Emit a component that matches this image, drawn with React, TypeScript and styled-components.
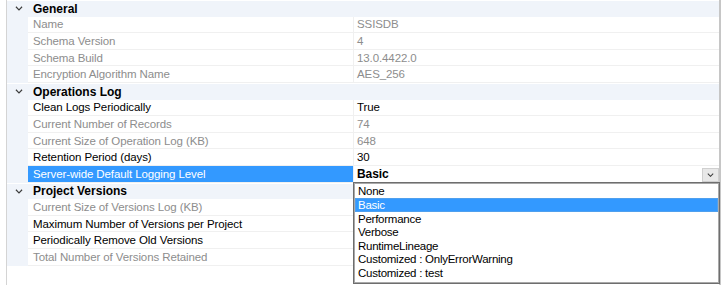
import React, { FC } from "react";
import styled, { createGlobalStyle } from "styled-components";

const GlobalStyle = createGlobalStyle`
  html, body {
    margin: 0;
    padding: 0;
    background: #fff;
  }
  body {
    font-family: "Liberation Sans", Arial, sans-serif;
    font-size: 11.5px;
    letter-spacing: -0.1px;
    color: #000;
  }
`;

const ROW_H = "16.6px";
const MARGIN_BG = "#f0f4fa";

export const StyledPage = styled.div`
  width: 728px;
  height: 290px;
  overflow: hidden;
  display: flex;
`;

export const StyledGrid = styled.div`
  margin-left: 6px;
  width: 712px;
  height: 285px;
  border-left: 1px solid #d4d4d4;
  border-right: 2px solid #c6c6c6;
  display: flex;
  flex-direction: column;
`;

export const StyledCategory = styled.div`
  display: flex;
  align-items: center;
  height: ${ROW_H};
  box-sizing: border-box;
  border-top: 1px solid #fff;
  background: ${MARGIN_BG};
  font-weight: bold;
  font-size: 12px;
  letter-spacing: 0;
`;

export const StyledToggle = styled.div`
  width: 21px;
  display: flex;
  justify-content: center;
  padding-left: 2px;
  box-sizing: border-box;
`;

export const StyledCategoryTitle = styled.span`
  padding-left: 5px;
`;

export const StyledRow = styled.div`
  display: flex;
  height: ${ROW_H};
`;

export const StyledMargin = styled.div`
  width: 21px;
  flex: none;
  background: ${MARGIN_BG};
`;

export const StyledName = styled.div<{ $muted?: boolean; $selected?: boolean }>`
  width: 326px;
  flex: none;
  box-sizing: border-box;
  display: flex;
  align-items: center;
  padding-left: 5px;
  border-right: 1px solid #f0f0f0;
  border-bottom: 1px solid #f0f0f0;
  white-space: nowrap;
  color: ${({ $muted, $selected }) =>
    $selected ? "#fff" : $muted ? "#8d8d8d" : "#000"};
  background: ${({ $selected }) => ($selected ? "#3399ff" : "#fff")};
`;

export const StyledValue = styled.div<{ $muted?: boolean; $bold?: boolean }>`
  flex: 1;
  position: relative;
  box-sizing: border-box;
  display: flex;
  align-items: center;
  padding-left: 3px;
  border-bottom: 1px solid #f0f0f0;
  white-space: nowrap;
  color: ${({ $muted }) => ($muted ? "#8d8d8d" : "#000")};
  font-weight: ${({ $bold }) => ($bold ? "bold" : "normal")};
  font-size: ${({ $bold }) => ($bold ? "12px" : "inherit")};
`;

export const StyledValueText = styled.span`
  flex: 1;
`;

export const StyledDropButton = styled.div`
  width: 17px;
  height: 14px;
  margin-top: 2px;
  box-sizing: border-box;
  border: 1px solid #cfcfcf;
  background: #e8e8e8;
  display: flex;
  align-items: center;
  justify-content: center;
`;

export const StyledList = styled.ul`
  position: absolute;
  top: 100%;
  left: -1px;
  right: -1px;
  height: 102px;
  margin: 0;
  padding: 2px 1px 0;
  list-style: none;
  box-sizing: border-box;
  background: #fff;
  border: 1px solid #6e6e6e;
  box-shadow: inset 0 0 0 1px #a9a9a9;
  font-weight: normal;
  font-size: 11.5px;
  letter-spacing: -0.25px;
  z-index: 2;
`;

export const StyledItem = styled.li<{ $active?: boolean }>`
  height: 13.6px;
  box-sizing: border-box;
  display: flex;
  align-items: center;
  padding-left: 2px;
  color: ${({ $active }) => ($active ? "#fff" : "#000")};
  background: ${({ $active }) => ($active ? "#3399ff" : "transparent")};
  border: 1px solid ${({ $active }) => ($active ? "#4fa0ee" : "transparent")};
`;

export const StyledFiller = styled.div`
  flex: 1;
`;

type Prop = {
  name: string;
  value?: string;
  muted?: boolean;
  selected?: boolean;
};

type Section = { title: string; props: Prop[] };

// values of the Project Versions rows sit under the open list
const sections: Section[] = [
  {
    title: "General",
    props: [
      { name: "Name", value: "SSISDB", muted: true },
      { name: "Schema Version", value: "4", muted: true },
      { name: "Schema Build", value: "13.0.4422.0", muted: true },
      { name: "Encryption Algorithm Name", value: "AES_256", muted: true },
    ],
  },
  {
    title: "Operations Log",
    props: [
      { name: "Clean Logs Periodically", value: "True" },
      { name: "Current Number of Records", value: "74", muted: true },
      { name: "Current Size of Operation Log (KB)", value: "648", muted: true },
      { name: "Retention Period (days)", value: "30" },
      { name: "Server-wide Default Logging Level", value: "Basic", selected: true },
    ],
  },
  {
    title: "Project Versions",
    props: [
      { name: "Current Size of Versions Log (KB)", muted: true },
      { name: "Maximum Number of Versions per Project" },
      { name: "Periodically Remove Old Versions" },
      { name: "Total Number of Versions Retained", muted: true },
    ],
  },
];

const levels = [
  "None",
  "Basic",
  "Performance",
  "Verbose",
  "RuntimeLineage",
  "Customized : OnlyErrorWarning",
  "Customized : test",
];

const Chevron: FC<{ size?: number }> = ({ size = 8 }) => (
  <svg width={size} height={size * 0.6} viewBox="0 0 8 5">
    <path d="M0.8 0.8 L4 4 L7.2 0.8" fill="none" stroke="#3c3c3c" strokeWidth="1.2" />
  </svg>
);

const PropertyRow: FC<{ prop: Prop }> = ({ prop }) => (
  <StyledRow>
    <StyledMargin />
    <StyledName $muted={prop.muted} $selected={prop.selected}>
      {prop.name}
    </StyledName>
    <StyledValue $muted={prop.muted} $bold={prop.selected}>
      <StyledValueText>{prop.value}</StyledValueText>
      {prop.selected && (
        <>
          <StyledDropButton>
            <Chevron size={7} />
          </StyledDropButton>
          <StyledList>
            {levels.map((level) => (
              <StyledItem key={level} $active={level === prop.value}>
                {level}
              </StyledItem>
            ))}
          </StyledList>
        </>
      )}
    </StyledValue>
  </StyledRow>
);

export default function App() {
  return (
    <StyledPage>
      <GlobalStyle />
      <StyledGrid>
        {sections.map((section) => (
          <React.Fragment key={section.title}>
            <StyledCategory>
              <StyledToggle>
                <Chevron />
              </StyledToggle>
              <StyledCategoryTitle>{section.title}</StyledCategoryTitle>
            </StyledCategory>
            {section.props.map((prop) => (
              <PropertyRow key={prop.name} prop={prop} />
            ))}
          </React.Fragment>
        ))}
        <StyledFiller />
      </StyledGrid>
    </StyledPage>
  );
}
